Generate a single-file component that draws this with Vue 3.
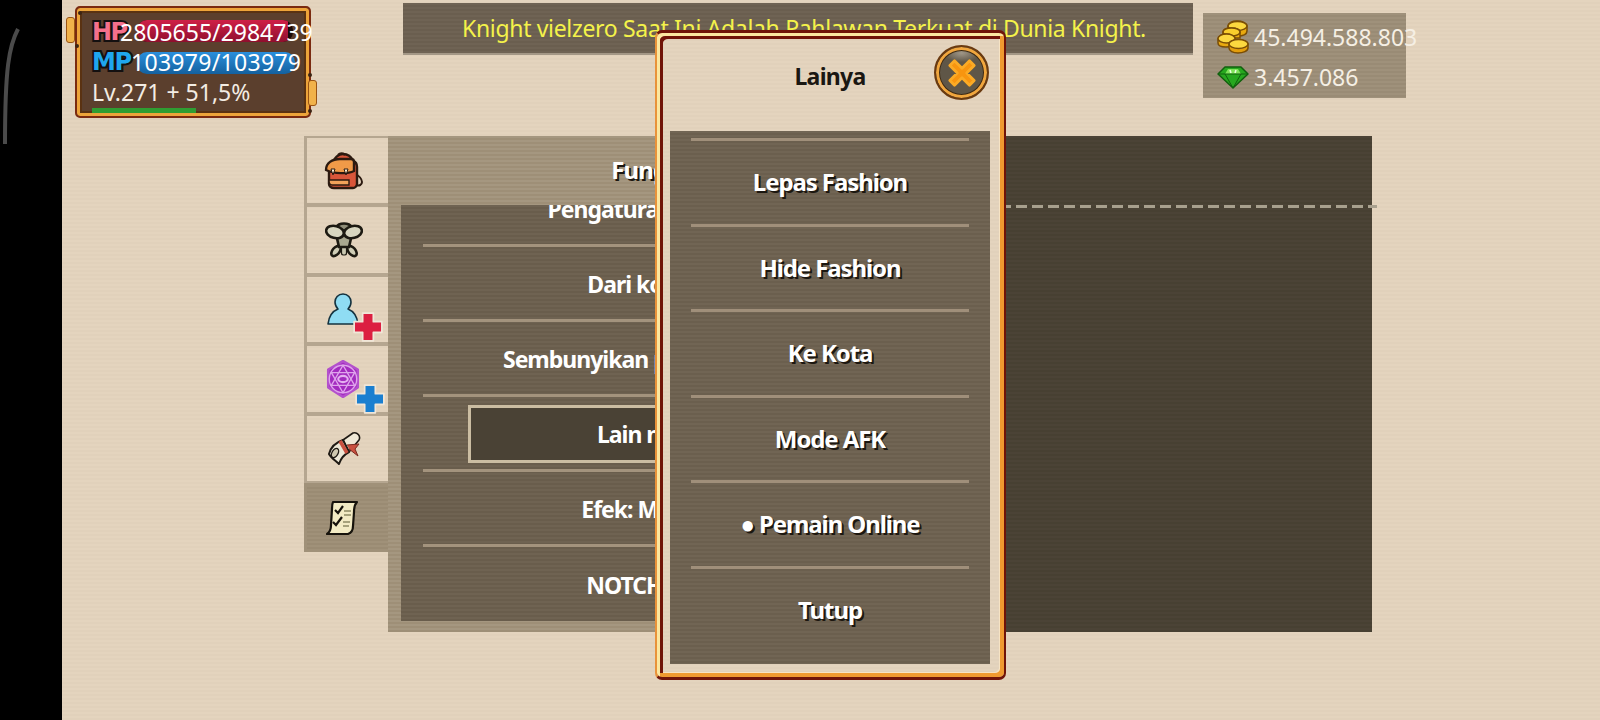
<script setup>
const tabs = ['bag', 'armor', 'person', 'magic', 'scroll', 'list']
const settingRows = [
  { label: 'Pengaturan Tampilan Grafis' },
  { label: 'Dari kota ke pemain' },
  { label: 'Sembunyikan pemain lain di peta ini' },
  { label: 'Lain nya ke utama', selected: true },
  { label: 'Efek: Mati Sementara' },
  { label: 'NOTCH: Aktif Semua' }
]
const moreRows = ['Lepas Fashion', 'Hide Fashion', 'Ke Kota', 'Mode AFK', '● Pemain Online', 'Tutup']
</script>

<template>
  <div class="page">
    <div class="bezel">
      <svg class="bezel-curve" width="20" height="118" viewBox="0 0 20 118">
        <path d="M17 1C8 18 4 40 4 116" fill="none" stroke="#4b4b4b" stroke-width="4" />
      </svg>
    </div>

    <div class="stage">
      <div class="topbar">
        <div class="status">
          <i class="knob knob-left"></i>
          <i class="knob knob-right"></i>
          <i class="rivet rivet-a"></i>
          <i class="rivet rivet-b"></i>
          <i class="rivet rivet-c"></i>
          <i class="rivet rivet-d"></i>
          <div class="status-row hp">
            <span class="tag tag-hp">HP</span>
            <span class="meter"><i class="meter-fill hp-fill"></i></span>
            <span class="value">2805655/2984739</span>
          </div>
          <div class="status-row mp">
            <span class="tag tag-mp">MP</span>
            <span class="meter"><i class="meter-fill mp-fill"></i></span>
            <span class="value">103979/103979</span>
          </div>
          <div class="level">Lv.271 + 51,5%</div>
          <div class="xp"></div>
        </div>

        <div class="banner">Knight vielzero Saat Ini Adalah Pahlawan Terkuat di Dunia Knight.</div>

        <div class="wallet">
          <div class="wallet-row">
            <svg width="32" height="34" viewBox="0 0 32 34">
              <g stroke="#7a4d05" stroke-width="1.5" fill="#f7c41c">
                <path d="M11 6c0-3 4-5 9-5s10 2 10 5v5c0 3-4 5-10 5s-9-2-9-5z" fill="#e9a90f" />
                <ellipse cx="20.500" cy="6" rx="9.500" ry="4.500" fill="#fcd83f" />
                <path d="M6 12c0-3 4-4 8-4s9 1 9 4v6H6z" fill="#e9a90f" />
                <ellipse cx="14.500" cy="12" rx="8.500" ry="4" fill="#f9ce2c" />
                <path d="M1 19c0-3 4-5 8-5s9 2 9 5v4c0 3-4 4-9 4s-8-1-8-4z" fill="#e9a90f" />
                <ellipse cx="9.500" cy="18.500" rx="8.500" ry="4.500" fill="#fcd83f" />
                <path d="M12 24c0-3 4-4 9-4s10 1 10 4v4c0 3-5 5-10 5s-9-2-9-5z" fill="#e39e0c" />
                <ellipse cx="21.500" cy="24" rx="9.500" ry="4.500" fill="#fcd83f" />
              </g>
            </svg>
            <span>45.494.588.803</span>
          </div>
          <div class="wallet-row">
            <svg width="32" height="24" viewBox="0 0 32 24">
              <path d="M8 2h16l7 7-15 14L1 9z" fill="#27a81f" stroke="#11600e" stroke-width="1.500" stroke-linejoin="round" />
              <path d="M8 9l3-5h10l3 5z" fill="#7fe35a" />
              <path d="M13 5l1 3M19 5l-1 3" stroke="#e8ffe0" stroke-width="1.500" />
              <path d="M1 9h30M8 9l8 14 8-14" fill="none" stroke="#11600e" stroke-width="1" />
            </svg>
            <span>3.457.086</span>
          </div>
        </div>
      </div>

      <div class="workspace">
        <div class="tabs">
          <div v-for="tab in tabs" :key="tab" class="tab" :class="{ active: tab === 'list' }">
            <svg v-if="tab === 'bag'" width="42" height="38" viewBox="0 0 42 38">
              <path d="M30 20c5 3 9 7 9 10s-3 4-5 3-5-6-6-9" fill="none" stroke="#2c1a10" stroke-width="2" />
              <path d="M10 12C11 5 16 2 20 2s8 2 10 7c3 1 4 3 4 6v17c0 2-2 4-4 4H11c-3 0-5-2-5-4V18c0-3 2-5 4-6z" fill="#d9563a" stroke="#2c1a10" stroke-width="2.400" stroke-linejoin="round" />
              <path d="M3 18C3 11 9 7 17 7h11c2 0 3 1 3 3v9c-6 3-20 3-28-1z" fill="#f09a48" stroke="#2c1a10" stroke-width="2.400" stroke-linejoin="round" />
              <path d="M6 28h20v5H9c-2 0-3-2-3-5z" fill="#f1a25a" stroke="#2c1a10" stroke-width="1.400" />
              <path d="M8 17l2 6 2-6zM21 17l2 6 2-6z" fill="#fff3d9" stroke="#2c1a10" stroke-width="1" />
              <path d="M15 3c2-2 5-2 7 0" fill="none" stroke="#2c1a10" stroke-width="2.400" />
            </svg>

            <svg v-else-if="tab === 'armor'" width="38" height="36" viewBox="0 0 38 36">
              <g stroke="#1d1a12" stroke-width="2.600">
                <ellipse cx="11" cy="29" rx="3.500" ry="6" transform="rotate(40 11 29)" fill="#cfcdb6" />
                <ellipse cx="27" cy="29" rx="3.500" ry="6" transform="rotate(-40 27 29)" fill="#cfcdb6" />
                <rect x="16.500" y="22" width="5" height="11" rx="2" fill="#c9c7b0" stroke-width="1.200" />
                <path d="M11 12h16l-3 13H14z" fill="#a9a88f" />
                <ellipse cx="19" cy="5" rx="7" ry="3.500" fill="#8f8d78" />
                <ellipse cx="10" cy="10" rx="9" ry="6" transform="rotate(14 10 10)" fill="#d8d6c0" />
                <ellipse cx="28" cy="10" rx="9" ry="6" transform="rotate(-14 28 10)" fill="#d8d6c0" />
              </g>
            </svg>

            <div v-else-if="tab === 'person'" class="icon-pair">
              <svg width="34" height="34" viewBox="0 0 34 34">
                <path d="M17 2c5 0 8 4 8 8 0 3-1 5-3 7 5 2 9 6 10 15H2c1-9 5-13 10-15-2-2-3-4-3-7 0-4 3-8 8-8z" fill="#8fdcf3" stroke="#14323f" stroke-width="1.600" stroke-linejoin="round" />
              </svg>
              <svg class="badge" width="32" height="32" viewBox="0 0 30 30">
                <path d="M10 2h10v8h8v10h-8v8H10v-8H2V10h8z" fill="#dc1f41" stroke="#f0e6d8" stroke-width="1.600" stroke-linejoin="round" />
              </svg>
            </div>

            <div v-else-if="tab === 'magic'" class="icon-pair">
              <svg width="38" height="38" viewBox="0 0 36 36">
                <path d="M18 1l14 8v17l-14 9-14-9V9z" fill="#a32bbf" stroke="#b350cc" stroke-width="2.400" stroke-linejoin="round" />
                <circle cx="18" cy="18" r="13" fill="none" stroke="#dfa4ec" stroke-width="1.300" />
                <path d="M18 5l11 19H7zM18 31L7 12h22z" fill="none" stroke="#dfa4ec" stroke-width="1.300" />
                <ellipse cx="18" cy="18" rx="4.500" ry="3" fill="#a32bbf" stroke="#e4b0f0" stroke-width="2" />
              </svg>
              <svg class="badge" width="32" height="32" viewBox="0 0 30 30">
                <path d="M10 2h10v8h8v10h-8v8H10v-8H2V10h8z" fill="#1a7fd0" stroke="#f0e6d8" stroke-width="1.600" stroke-linejoin="round" />
              </svg>
            </div>

            <svg v-else-if="tab === 'scroll'" width="34" height="36" viewBox="0 0 34 36">
              <path d="M16 10L26 3a5 5 0 0 1 6 7L22 22z" fill="#efe8d6" stroke="#1f1a14" stroke-width="1.600" stroke-linejoin="round" />
              <path d="M20 15l12-1-4 5 3 7-9-7" fill="#c9503f" stroke="#7a2a20" stroke-width="1" stroke-linejoin="round" />
              <path d="M2 24C4 16 10 12 16 10l6 12c-4 2-8 6-10 12-3-3-8-6-10-10z" fill="#ece7d6" stroke="#1f1a14" stroke-width="2" stroke-linejoin="round" />
              <ellipse cx="8" cy="23" rx="3" ry="5" transform="rotate(30 8 23)" fill="#cfc8b0" stroke="#1f1a14" stroke-width="1.400" />
              <path d="M13 11l7 12" stroke="#c9503f" stroke-width="3.500" />
            </svg>

            <svg v-else width="32" height="36" viewBox="0 0 32 36">
              <path d="M7 2h24c-3 3-3 6-3 10l-1 14c0 4-2 7-5 8H1c3-2 4-5 4-9L6 9c0-3 0-5 1-7z" fill="#f3ebc4" stroke="#17130c" stroke-width="2.200" stroke-linejoin="round" />
              <path d="M9 10l3 3 5-7M7 22l3 3 6-8" fill="none" stroke="#17130c" stroke-width="2.200" />
              <path d="M18 11h7M18 15h7M17 22h7M17 26h6" stroke="#8e8a63" stroke-width="1.600" />
            </svg>
          </div>
        </div>

        <div class="settings">
          <div class="settings-left">
            <div class="settings-title">Fungsi Lainnya</div>
            <div class="settings-list">
              <div class="settings-track">
                <div v-for="row in settingRows" :key="row.label" class="settings-row">
                  <div class="settings-label" :class="{ selected: row.selected }">{{ row.label }}</div>
                </div>
              </div>
            </div>
          </div>
          <div class="settings-right">
            <div class="dashed"></div>
          </div>
        </div>
      </div>
    </div>

    <div class="modal">
      <div class="modal-head">
        <span class="modal-title">Lainya</span>
        <div class="close">
          <svg width="30" height="30" viewBox="0 0 32 32">
            <path d="M8 3l8 8 8-8 5 5-8 8 8 8-5 5-8-8-8 8-5-5 8-8-8-8z" fill="#f8950f" stroke="#fbaa25" stroke-width="3" stroke-linejoin="round" />
          </svg>
        </div>
      </div>
      <div class="modal-list">
        <div v-for="row in moreRows" :key="row" class="modal-row">{{ row }}</div>
      </div>
    </div>
  </div>
</template>

<style>
html,
body {
  margin: 0;
  background: #000;
}
</style>

<style scoped>
.page {
  position: relative;
  display: flex;
  width: 1600px;
  height: 720px;
  overflow: hidden;
  font-family: "Noto Sans", "Open Sans", sans-serif;
  color: #fff;
  background: #e3d3bd;
}

.bezel {
  flex: 0 0 62px;
  background: #000;
}

.bezel-curve {
  display: block;
  margin-top: 28px;
  margin-left: 1px;
}

.stage {
  flex: 1;
  min-width: 0;
  background: repeating-linear-gradient(180deg, #e4d4be 0 2px, #e1d1bb 2px 4px);
}

.topbar {
  display: flex;
  align-items: flex-start;
  height: 136px;
}

.status {
  position: relative;
  box-sizing: border-box;
  flex: 0 0 236px;
  min-width: 0;
  height: 112px;
  margin-top: 6px;
  margin-left: 13px;
  padding: 9px 0 0 15px;
  background: #5b3f2d;
  border: 2px solid #7a2a10;
  border-radius: 5px;
  box-shadow: inset 0 0 0 3px #eda43a, inset 0 0 0 5px #5a3212;
}

.knob {
  position: absolute;
  width: 7px;
  height: 24px;
  background: #f1b24a;
  border: 1px solid #9a5414;
  border-radius: 3px;
}

.knob-left {
  left: -11px;
  top: 9px;
}

.knob-right {
  right: -8px;
  top: 72px;
}

.rivet {
  position: absolute;
  width: 4px;
  height: 4px;
  background: #3b2413;
  border-radius: 50%;
}

.rivet-a {
  left: 1px;
  top: 3px;
}

.rivet-b {
  left: -2px;
  top: 36px;
}

.rivet-c {
  right: -3px;
  top: 65px;
}

.rivet-d {
  right: -3px;
  top: 101px;
}

.status-row {
  position: relative;
  display: flex;
  align-items: center;
  height: 30px;
  white-space: nowrap;
}

.tag {
  position: relative;
  z-index: 1;
  flex: 0 0 40px;
  font-family: "DejaVu Sans", sans-serif;
  font-size: 24px;
  font-weight: 700;
  line-height: 30px;
  letter-spacing: -1.500px;
  -webkit-text-stroke: 4px #141010;
  paint-order: stroke fill;
}

.tag-hp {
  color: #f5708c;
}

.tag-mp {
  color: #1fa6ee;
}

.meter {
  position: absolute;
  left: 45px;
  top: 3px;
  width: 156px;
  height: 22px;
  background: #180a0a;
  border-radius: 10px;
  overflow: hidden;
}

.mp .meter {
  top: 5px;
  width: 158px;
}

.meter-fill {
  display: block;
  height: 100%;
}

.hp-fill {
  width: 97%;
  background: linear-gradient(180deg, #cf2047, #8f0f2d);
}

.mp-fill {
  width: 100%;
  background: linear-gradient(180deg, #2a8fdc, #14619f);
}

.value {
  position: relative;
  z-index: 2;
  font-size: 23px;
  line-height: 30px;
}

.hp .value {
  margin-left: -12px;
}

.mp .value {
  margin-left: -1px;
  letter-spacing: 0.300px;
}

.level {
  height: 30px;
  margin-top: 1px;
  font-size: 23px;
  line-height: 28px;
  color: #f3ece3;
}

.xp {
  width: 104px;
  height: 5px;
  background: #2f9d32;
}

.banner {
  box-sizing: border-box;
  flex: 0 0 790px;
  height: 52px;
  margin-top: 3px;
  margin-left: 92px;
  padding-top: 9px;
  padding-left: 12px;
  font-size: 23px;
  line-height: 32px;
  letter-spacing: -0.330px;
  color: #f4f24a;
  text-align: center;
  white-space: nowrap;
  background: repeating-linear-gradient(180deg, #6f6354 0 2px, #6a5e4f 2px 4px);
  border-bottom: 2px solid #a39786;
}

.wallet {
  box-sizing: border-box;
  flex: 0 0 203px;
  min-width: 0;
  height: 85px;
  margin-top: 13px;
  margin-left: 10px;
  padding: 6px 0 0 14px;
  background: repeating-linear-gradient(180deg, #9f917b 0 2px, #998b75 2px 4px);
}

.wallet-row {
  display: flex;
  align-items: center;
  gap: 5px;
  height: 36px;
  font-size: 23px;
  white-space: nowrap;
  color: #f5efe4;
}

.wallet-row svg {
  flex: none;
}

.wallet-row + .wallet-row {
  margin-top: 4px;
}

.workspace {
  display: flex;
  align-items: flex-start;
  margin-left: 242px;
}

.tabs {
  display: flex;
  flex-direction: column;
  flex: 0 0 84px;
}

.tab {
  box-sizing: border-box;
  display: flex;
  align-items: center;
  justify-content: center;
  height: 69.400px;
  padding-right: 8px;
  border: 3px solid #b5a690;
  border-right: 0;
  border-bottom-width: 2px;
  border-top-width: 2px;
}

.tab.active {
  background: repeating-linear-gradient(180deg, #a09179 0 2px, #9a8b73 2px 4px);
  border-color: #a09179;
  padding-right: 12px;
}

.icon-pair {
  position: relative;
  margin-right: 2px;
}

.icon-pair svg:first-child {
  display: block;
}

.badge {
  position: absolute;
  right: -24px;
  bottom: -17px;
}

.settings {
  display: flex;
  flex: 0 0 984px;
  min-width: 0;
  height: 496px;
}

.settings-left {
  flex: 0 0 612px;
  box-sizing: border-box;
  padding: 0 13px 11px;
  display: flex;
  flex-direction: column;
  background: repeating-linear-gradient(180deg, #a59780 0 2px, #9e8f77 2px 4px);
}

.settings-title {
  flex: 0 0 69px;
  font-size: 24px;
  font-weight: 700;
  line-height: 67px;
  letter-spacing: -1px;
  text-align: center;
  text-shadow: 2px 2px 0 #1c1710;
}

.settings-list {
  flex: 1;
  overflow: hidden;
  padding: 0 22px;
  background: repeating-linear-gradient(180deg, #6f6352 0 2px, #695d4c 2px 4px);
}

.settings-track {
  margin-top: -33px;
}

.settings-row {
  box-sizing: border-box;
  display: flex;
  align-items: center;
  justify-content: center;
  height: 75px;
  padding-top: 1px;
  border-bottom: 3px solid #a3937d;
}

.settings-row:last-child {
  border-bottom: 0;
}

.settings-label {
  box-sizing: border-box;
  width: 100%;
  font-size: 23px;
  font-weight: 700;
  letter-spacing: -1px;
  text-align: center;
}

.settings-label.selected {
  width: 452px;
  height: 58px;
  line-height: 52px;
  background: #4a4235;
  border: 3px solid #cbbda2;
}

.settings-right {
  flex: 1;
  min-width: 0;
  background: repeating-linear-gradient(180deg, #4b4336 0 2px, #474032 2px 4px);
}

.dashed {
  width: 377px;
  height: 3px;
  margin-top: 69px;
  background: repeating-linear-gradient(90deg, #a8a08e 0 11px, transparent 11px 16px);
}

.modal {
  position: absolute;
  left: 655px;
  top: 30px;
  box-sizing: border-box;
  width: 351px;
  height: 650px;
  padding: 4px 14px 13px 13px;
  background: repeating-linear-gradient(180deg, #e4d4be 0 2px, #e1d1bb 2px 4px);
  border-style: solid;
  border-width: 3px 2px 3px 2px;
  border-color: #701408 #701408 #701408 #e8923a;
  border-radius: 7px;
  box-shadow: inset 3px 3px 0 #fbe7a0, inset -4px -4px 0 #f09a30, inset 6px 6px 0 #701408, inset -5px -5px 0 #f6e3c4;
  display: flex;
  flex-direction: column;
}

.modal-head {
  display: flex;
  align-items: center;
  justify-content: center;
  position: relative;
  flex: 0 0 94px;
  padding-bottom: 16px;
  box-sizing: border-box;
}

.modal-title {
  font-size: 23px;
  font-weight: 700;
  letter-spacing: -0.700px;
  color: #1a1712;
}

.close {
  position: absolute;
  right: 1px;
  top: 8px;
  box-sizing: border-box;
  display: flex;
  align-items: center;
  justify-content: center;
  width: 55px;
  height: 55px;
  background: radial-gradient(ellipse 20px 10px at 50% 12%, #a09788, #5f5647 90%);
  border: 2px solid #6a3a10;
  border-radius: 50%;
  box-shadow: inset 0 0 0 3px #f0a63e, inset 0 0 0 4px #3d2a14;
}

.modal-list {
  flex: 1;
  padding: 7px 21px 0;
  background: repeating-linear-gradient(180deg, #716554 0 2px, #6b5f4e 2px 4px);
}

.modal-row {
  box-sizing: border-box;
  display: flex;
  align-items: center;
  justify-content: center;
  height: 85.500px;
  padding-bottom: 1px;
  border-top: 3px solid #a08f7a;
  font-size: 24px;
  font-weight: 700;
  letter-spacing: -1.100px;
  text-shadow: 2px 2px 0 #1c1710;
}
</style>
